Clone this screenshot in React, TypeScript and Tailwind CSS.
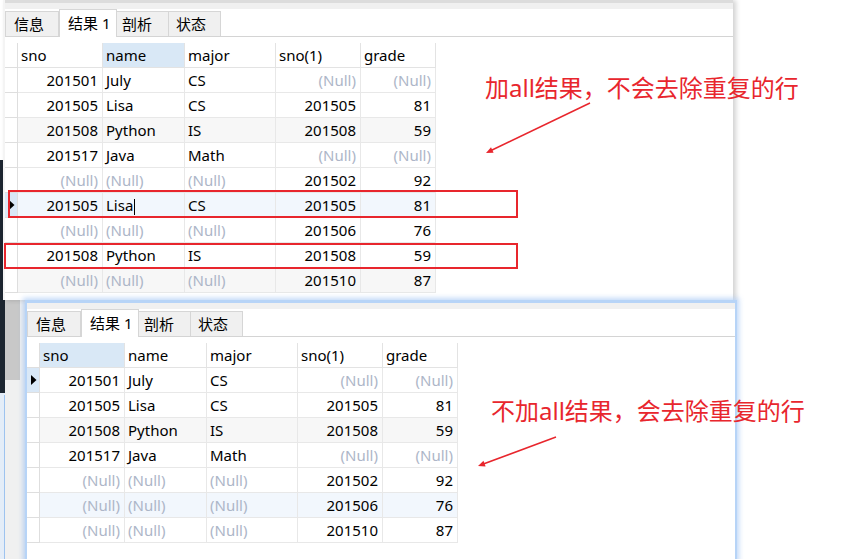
import React from "react";

type Cell = string | null;
type Row = { cells: Cell[]; bg?: string; current?: boolean; cursor?: boolean };

const FONT = "font-['Noto_Sans','Noto_Sans_CJK_SC',sans-serif]";
const RED = "#e8262d";

const COLS = ["sno", "name", "major", "sno(1)", "grade"];
const WIDTHS = ["w-[85px]", "w-[82px]", "w-[91px]", "w-[85px]", "w-[75px]"];
const RIGHT = [true, false, false, true, true];

const topRows: Row[] = [
  { cells: ["201501", "July", "CS", null, null] },
  { cells: ["201505", "Lisa", "CS", "201505", "81"] },
  { cells: ["201508", "Python", "IS", "201508", "59"], bg: "bg-[#f7f7f7]" },
  { cells: ["201517", "Java", "Math", null, null] },
  { cells: [null, null, null, "201502", "92"] },
  { cells: ["201505", "Lisa", "CS", "201505", "81"], bg: "bg-[#f2f7fd]", current: true, cursor: true },
  { cells: [null, null, null, "201506", "76"] },
  { cells: ["201508", "Python", "IS", "201508", "59"] },
  { cells: [null, null, null, "201510", "87"], bg: "bg-[#f7f7f7]" },
];

const bottomRows: Row[] = [
  { cells: ["201501", "July", "CS", null, null], current: true },
  { cells: ["201505", "Lisa", "CS", "201505", "81"] },
  { cells: ["201508", "Python", "IS", "201508", "59"], bg: "bg-[#f7f7f7]" },
  { cells: ["201517", "Java", "Math", null, null] },
  { cells: [null, null, null, "201502", "92"] },
  { cells: [null, null, null, "201506", "76"], bg: "bg-[#f2f7fd]" },
  { cells: [null, null, null, "201510", "87"] },
];

function Tabs() {
  return (
    <div className="flex h-[28px] items-end border-b border-[#d4d4d4] bg-white text-[15px] text-black">
      <div className="flex h-[25px] w-[54px] items-center border border-b-0 border-[#d6d6d6] bg-[#f0f0f0] pl-2">信息</div>
      <div className="-mb-px flex h-[28px] w-[58px] items-center border border-b-0 border-[#d6d6d6] bg-white pl-2">结果 1</div>
      <div className="flex h-[25px] w-[52px] items-center border border-b-0 border-l-0 border-[#d6d6d6] bg-[#f0f0f0] pl-[5px]">剖析</div>
      <div className="flex h-[25px] w-[52px] items-center border border-b-0 border-l-0 border-[#d6d6d6] bg-[#f0f0f0] pl-[7px]">状态</div>
    </div>
  );
}

function Triangle() {
  return (
    <svg width="6" height="10" viewBox="0 0 6 10" className="ml-auto mr-[2px]">
      <path d="M0 0 L5.5 5 L0 10 Z" fill="#000" />
    </svg>
  );
}

function Grid({ rows, highlight }: { rows: Row[]; highlight: number }) {
  return (
    <div className="flex flex-col text-[15px]">
      <div className="flex">
        <div className="h-[25px] w-[13px] shrink-0 border-r border-b border-[#dedede] bg-white" />
        {COLS.map((c, i) => (
          <div
            key={c}
            className={`${WIDTHS[i]} h-[25px] shrink-0 border-r border-b border-[#e3e3e3] pl-[3px] leading-[24px] text-black ${
              i === highlight ? "bg-[#d9e8f6]" : "bg-white"
            }`}
          >
            {c}
          </div>
        ))}
      </div>
      {rows.map((r, ri) => (
        <div key={ri} className="flex">
          <div
            className={`flex h-[25px] w-[13px] shrink-0 items-center border-r border-b border-[#dedede] ${
              r.current ? "bg-[#d9e8f7]" : "bg-white"
            }`}
          >
            {r.current && <Triangle />}
          </div>
          {r.cells.map((v, ci) => (
            <div
              key={ci}
              className={`${WIDTHS[ci]} h-[25px] shrink-0 overflow-hidden whitespace-nowrap border-r border-b border-[#e8e8e8] leading-[24px] ${
                r.bg ?? "bg-white"
              } ${RIGHT[ci] ? "pr-1 text-right" : "pl-[3px] text-left"} ${v === null ? "text-[#adb6c8]" : "text-black"}`}
            >
              {v ?? "(Null)"}
              {r.cursor && ci === 1 && <span className="ml-px inline-block h-[16px] w-px bg-black align-middle" />}
            </div>
          ))}
        </div>
      ))}
    </div>
  );
}

export default function App() {
  return (
    <div className={`relative h-[559px] w-[867px] overflow-hidden bg-white ${FONT}`}>
      {/* desktop behind the windows */}
      <div className="absolute left-0 top-[160px] h-[233px] w-[5px] bg-[#1c2530]" />
      <div className="absolute left-[5px] top-[300px] h-[259px] w-[20px] bg-[#f0f0f0]" />
      <div className="absolute left-[5px] top-[300px] h-[80px] w-[15px] bg-[#c8c8c8]" />
      <div className="absolute left-0 top-[393px] h-[166px] w-[5px] bg-[#e4edf8]" />
      <div className="absolute left-[4px] top-[395px] h-[164px] w-px bg-[#9ec3ef]" />

      {/* top window */}
      <div className="absolute left-[3px] top-0 h-[300px] w-[730px] border-l-2 border-[#f4f4f4] bg-white shadow-[3px_0_5px_rgba(0,0,0,0.18)]">
        <div className="h-[3px] bg-[#dcdcdc]" />
        <div className="h-[6px] bg-[#f0f0f0]" />
        <Tabs />
        <div className="h-[6px]" />
        <Grid rows={topRows} highlight={1} />
      </div>

      {/* bottom window */}
      <div className="absolute left-[25px] top-[300px] h-[262px] w-[712px] border-l-2 border-t-[3px] border-r-2 border-[#b7d4f7] bg-white shadow-[0_0_5px_2px_rgba(120,170,240,0.45)]">
        <div className="h-[6px] bg-[#f0f0f0]" />
        <Tabs />
        <div className="h-[6px]" />
        <Grid rows={bottomRows} highlight={0} />
      </div>

      {/* red boxes */}
      <div className="absolute left-[8px] top-[190px] h-[28px] w-[510px] border-2 border-[#e8262d]" />
      <div className="absolute left-[4px] top-[243px] h-[26px] w-[514px] border-2 border-[#e8262d]" />

      {/* notes */}
      <div className="absolute left-[485px] top-[73px] whitespace-nowrap text-[24px] leading-[30px] text-[#e8262d]">
        加all结果，不会去除重复的行
      </div>
      <div className="absolute left-[491px] top-[396px] whitespace-nowrap text-[24px] leading-[30px] text-[#e8262d]">
        不加all结果，会去除重复的行
      </div>

      <svg className="pointer-events-none absolute inset-0" width="867" height="559">
        <line x1="590" y1="103" x2="490" y2="151" stroke={RED} strokeWidth="1.5" />
        <polygon points="486,153 493.6,152.7 491,147.3" fill={RED} />
        <line x1="556" y1="437" x2="482" y2="464.5" stroke={RED} strokeWidth="1.5" />
        <polygon points="478,466 485.6,466.4 483.5,460.8" fill={RED} />
      </svg>
    </div>
  );
}
